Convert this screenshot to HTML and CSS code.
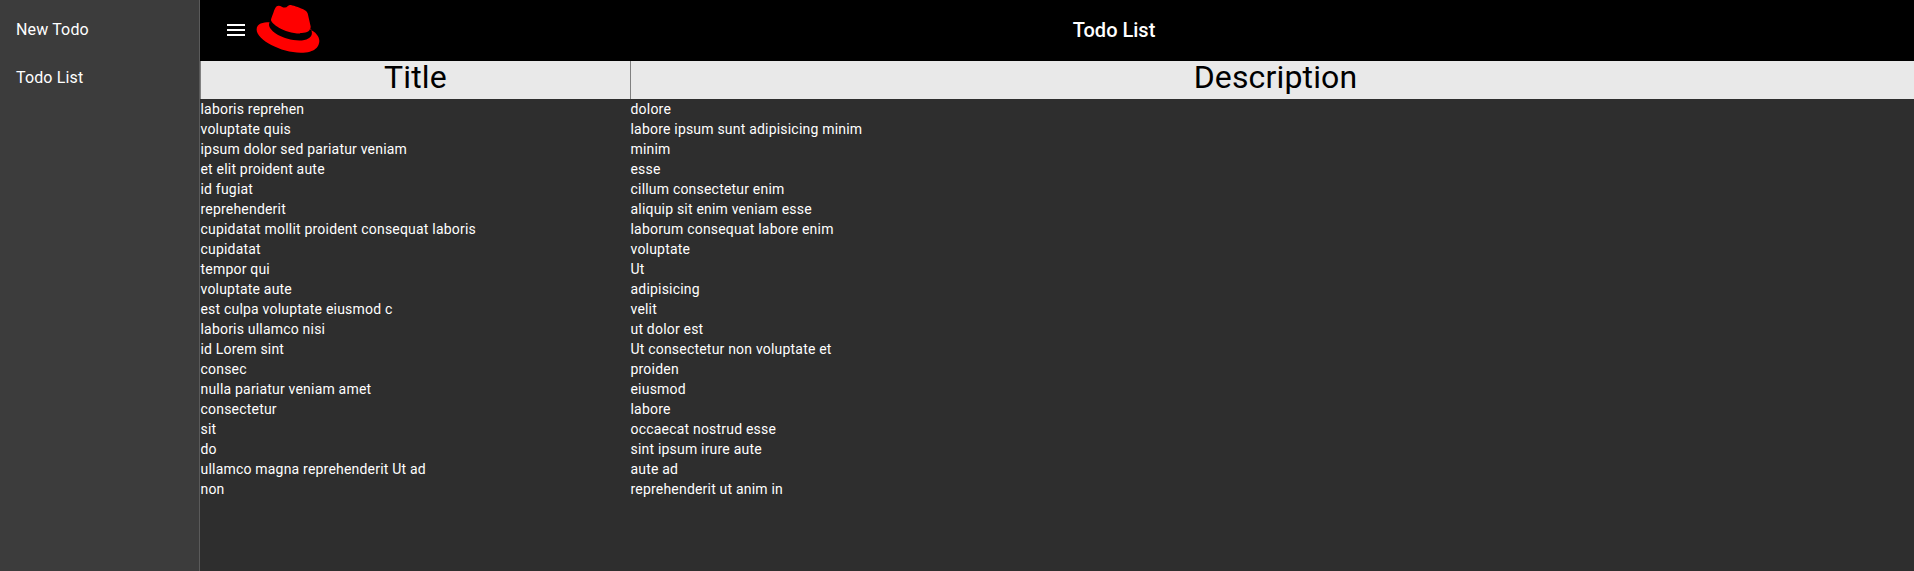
FILE: index.html
```html
<!DOCTYPE html>
<html>
    <head lang="en">
        <meta charset="UTF-8">
        <title>Todo List</title>
        <link rel="stylesheet" href="styles.css">
    </head>
    <body>
        <div id="app">
            <ul id="sidenav">
                <li>New Todo</li>
                <li>Todo List</li>
            </ul>
            <div id="main">
                <div id="toolbar">
                    <span class="menu-btn">
                        <svg width="24" height="24" viewBox="0 0 24 24"><path fill="#fff" d="M3 18h18v-2H3v2zm0-5h18v-2H3v2zm0-7v2h18V6H3z"/></svg>
                    </span>
                    <svg class="logo" width="64" height="48" viewBox="0 0 187 143"><path fill="#f00" d="M129.7 83.7c12.8 0 31.3-2.6 31.3-17.9a14.4 14.4 0 0 0-.3-3.5l-7.6-33.1c-1.8-7.3-3.3-10.6-16.1-17C127.1 7.1 105.6 0 99.2 0c-6 0-7.7 7.7-14.8 7.7-6.9 0-12-5.8-18.4-5.8-6.1 0-10.1 4.2-13.2 12.8 0 0-8.6 24.2-9.7 27.7a6.5 6.5 0 0 0-.2 2c0 9.4 37.1 40.3 86.8 40.3m33.2-11.6c1.8 8.4 1.8 9.3 1.8 10.4 0 14.4-16.2 22.4-37.5 22.4-48.1 0-90.2-28.1-90.2-46.7a19 19 0 0 1 1.6-7.5C21.4 51.5 0 54.5 0 73.3c0 30.9 73.2 69 131.2 69 44.4 0 55.6-20.1 55.6-36 0-12.5-10.8-26.7-30.3-35.1"/></svg>
                    <span class="toolbar-title">Todo List</span>
                </div>
                <table id="todos">
                    <thead>
                        <tr><th class="col-title">Title</th><th class="col-desc">Description</th></tr>
                    </thead>
                    <tbody>
                        <tr><td>laboris reprehen</td><td>dolore</td></tr>
                        <tr><td>voluptate quis</td><td>labore ipsum sunt adipisicing minim</td></tr>
                        <tr><td>ipsum dolor sed pariatur veniam</td><td>minim</td></tr>
                        <tr><td>et elit proident aute</td><td>esse</td></tr>
                        <tr><td>id fugiat</td><td>cillum consectetur enim</td></tr>
                        <tr><td>reprehenderit</td><td>aliquip sit enim veniam esse</td></tr>
                        <tr><td>cupidatat mollit proident consequat laboris</td><td>laborum consequat labore enim</td></tr>
                        <tr><td>cupidatat</td><td>voluptate</td></tr>
                        <tr><td>tempor qui</td><td>Ut</td></tr>
                        <tr><td>voluptate aute</td><td>adipisicing</td></tr>
                        <tr><td>est culpa voluptate eiusmod c</td><td>velit</td></tr>
                        <tr><td>laboris ullamco nisi</td><td>ut dolor est</td></tr>
                        <tr><td>id Lorem sint</td><td>Ut consectetur non voluptate et</td></tr>
                        <tr><td>consec</td><td>proiden</td></tr>
                        <tr><td>nulla pariatur veniam amet</td><td>eiusmod</td></tr>
                        <tr><td>consectetur</td><td>labore</td></tr>
                        <tr><td>sit</td><td>occaecat nostrud esse</td></tr>
                        <tr><td>do</td><td>sint ipsum irure aute</td></tr>
                        <tr><td>ullamco magna reprehenderit Ut ad</td><td>aute ad</td></tr>
                        <tr><td>non</td><td>reprehenderit ut anim in</td></tr>
                    </tbody>
                </table>
            </div>
        </div>
    </body>
</html>
```

FILE: styles.css
```css
*{
    margin:0;
    padding:0;
    box-sizing:border-box;
}
ul{
    list-style:none;
}
body{
    font-family:Roboto,sans-serif;
    background:#2e2e2e;
    color:#fff;
}
#app{
    display:flex;
    height:571px;
}
#sidenav{
    width:200px;
    flex:none;
    padding-top:6px;
    background:#3c3c3c;
    border-right:1px solid #5a5a5a;
}
#sidenav li{
    height:48px;
    line-height:48px;
    padding-left:16px;
    font-size:16px;
    letter-spacing:.15px;
}
#main{
    flex:1;
    min-width:0;
}
#toolbar{
    display:flex;
    align-items:center;
    height:61px;
    padding:0 6px 0 16px;
    background:#000;
}
.menu-btn{
    display:flex;
    justify-content:center;
    align-items:center;
    width:40px;
    height:40px;
    margin-bottom:1px;
}
.logo{
    display:block;
    margin-bottom:3px;
}
.toolbar-title{
    flex:1;
    margin-bottom:2px;
    text-align:center;
    font-size:20px;
    font-weight:500;
}
#todos{
    width:100%;
    table-layout:fixed;
    border-collapse:collapse;
}
#todos th{
    height:38px;
    padding-bottom:6px;
    background:#e9e9e9;
    color:#000;
    font-size:32px;
    font-weight:400;
    line-height:32px;
    letter-spacing:.15px;
    border-left:1px solid #808080;
}
#todos .col-title{
    width:430px;
}
#todos .col-desc{
    padding-left:6px;
}
#todos td{
    height:20px;
    padding:0;
    font-size:14px;
    line-height:20px;
    letter-spacing:.2px;
    white-space:nowrap;
}
```
